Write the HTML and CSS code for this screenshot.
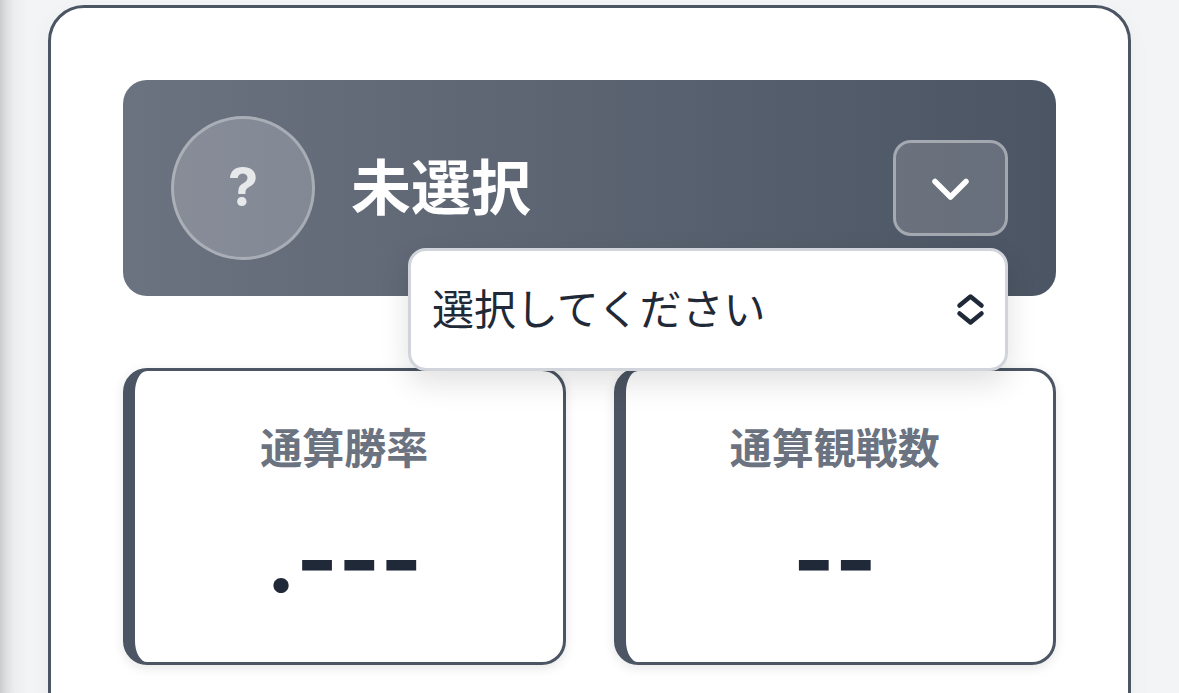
FILE: index.html
```
<!DOCTYPE html>
<html lang="ja">
<head>
    <meta charset="UTF-8">
    <meta name="viewport" content="width=device-width, initial-scale=1.0">
    <title>通算成績</title>
    <link rel="stylesheet" href="styles.css">
</head>
<body>
    <main class="stats-card">
        <header class="team-header">
            <div class="team-icon">?</div>
            <h1 class="team-name">未選択</h1>
            <button class="toggle-button" type="button" aria-label="チームを選択">
                <svg class="toggle-icon" viewBox="0 0 42 42" fill="none" stroke="currentColor" stroke-width="5.5" stroke-linecap="round" stroke-linejoin="round">
                    <path d="M5 14.5 L20.5 30 L36 14.5"/>
                </svg>
            </button>
            <div class="team-dropdown">
                <select class="team-select" aria-label="チーム">
                    <option>選択してください</option>
                </select>
                <svg class="select-icon" viewBox="0 0 30 36" fill="none" stroke="currentColor" stroke-width="4.5" stroke-linecap="round" stroke-linejoin="round">
                    <path d="M3.5 13.5 L14.5 4.5 L25.5 13.5"/>
                    <path d="M3.5 21.5 L14.5 30.5 L25.5 21.5"/>
                </svg>
            </div>
        </header>

        <section class="stats-grid">
            <div class="stat-box">
                <div class="stat-label">通算勝率</div>
                <div class="stat-value">.---</div>
            </div>
            <div class="stat-box">
                <div class="stat-label">通算観戦数</div>
                <div class="stat-value">--</div>
            </div>
        </section>
    </main>
</body>
</html>
```
FILE: styles.css
```
* {
    box-sizing: border-box;
}

body {
    margin: 0;
    padding: 5px 48px;
    font-family: Inter, 'Noto Sans CJK JP', sans-serif;
    color: #1f2937;
    background: linear-gradient(90deg, #cbcccd 0, #dddedf 6px, #ecedee 14px, #f3f4f6 28px);
}

.stats-card {
    padding: 72px;
    background: white;
    border: 3px solid #4b5563;
    border-radius: 36px;
    box-shadow: 0 6px 24px rgba(0, 0, 0, 0.04);
}

/* ヘッダー */
.team-header {
    position: relative;
    display: flex;
    align-items: center;
    gap: 36px;
    padding: 36px 48px;
    margin-bottom: 72px;
    border-radius: 24px;
    background: linear-gradient(90deg, #6b7280, #4b5563);
    color: white;
}

.team-icon {
    display: flex;
    align-items: center;
    justify-content: center;
    width: 144px;
    height: 144px;
    padding-bottom: 3px;
    border: 3px solid rgba(255, 255, 255, 0.3);
    border-radius: 50%;
    background: rgba(255, 255, 255, 0.2);
    color: rgba(255, 255, 255, 0.8);
    font-size: 54px;
    font-weight: 700;
}

.team-name {
    flex: 1;
    margin: 0;
    font-size: 60px;
    line-height: 72px;
    font-weight: 700;
}

.toggle-button {
    display: flex;
    align-items: center;
    justify-content: center;
    width: 115px;
    height: 96px;
    padding: 0;
    border: 3px solid rgba(255, 255, 255, 0.4);
    border-radius: 18px;
    background: rgba(255, 255, 255, 0.15);
    color: white;
    cursor: pointer;
}

.toggle-icon {
    width: 42px;
    height: 42px;
}

.team-dropdown {
    position: absolute;
    top: calc(100% - 48px);
    right: 48px;
    z-index: 10;
    width: 600px;
    max-width: 80%;
    color: #1f2937;
}

.team-select {
    display: block;
    width: 100%;
    height: 123px;
    padding: 0 72px 0 21px;
    border: 3px solid #d1d5db;
    border-radius: 18px;
    appearance: none;
    background: white;
    box-shadow: 0 12px 30px rgba(0, 0, 0, 0.12);
    color: inherit;
    font-family: inherit;
    font-size: 42px;
}

.select-icon {
    position: absolute;
    top: 44px;
    right: 22px;
    width: 30px;
    height: 36px;
    pointer-events: none;
}

/* 成績 */
.stats-grid {
    display: grid;
    grid-template-columns: 1fr 1fr;
    gap: 48px;
}

.stat-box {
    padding: 48px 45px 48px 36px;
    border: 3px solid #4b5563;
    border-left-width: 12px;
    border-radius: 24px;
    background: white;
    box-shadow: 0 3px 12px rgba(0, 0, 0, 0.1);
    text-align: center;
}

.stat-label {
    margin-bottom: 27px;
    color: #6b7280;
    font-size: 42px;
    line-height: 60px;
    font-weight: 700;
}

.stat-value {
    font-size: 90px;
    line-height: 108px;
    font-weight: 700;
}
```
